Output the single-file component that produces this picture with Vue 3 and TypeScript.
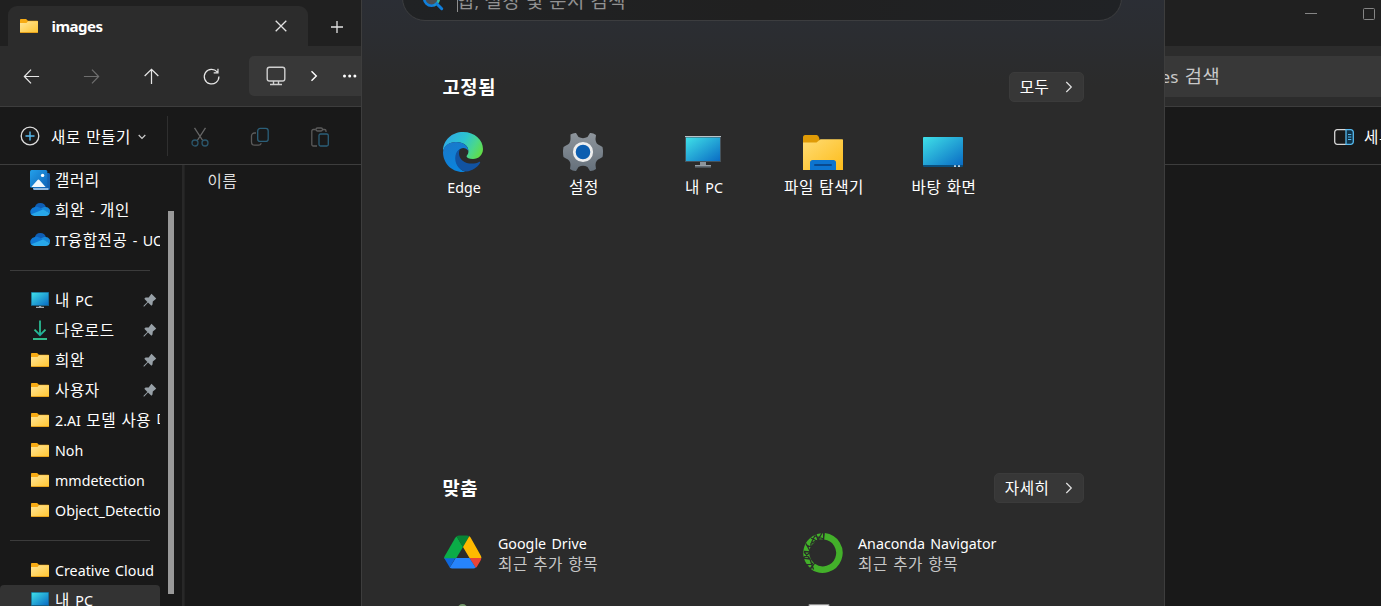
<script setup lang="ts">
import { h, type FunctionalComponent } from 'vue'

type IconName = 'gallery' | 'cloud' | 'pc' | 'download' | 'folder'
interface NavItem { icon?: IconName; text?: string; pinned?: boolean; active?: boolean }

// Splits a caption into Hangul and Latin runs so that each script keeps its own metrics.
const Label: FunctionalComponent<{ text: string }> = (props) =>
  h('span', { class: 'label' },
    (props.text.match(/[\u3131-\uD79D]+|[^\u3131-\uD79D]+/g) ?? []).map((run) =>
      h('span', { class: /[\u3131-\uD79D]/.test(run) ? 'ko' : 'en' }, run)))
Label.props = ['text']

const nav: NavItem[] = [
  { icon: 'gallery', text: '갤러리' },
  { icon: 'cloud', text: '희완 - 개인' },
  { icon: 'cloud', text: 'IT융합전공 - UOU' },
  {},
  { icon: 'pc', text: '내 PC', pinned: true },
  { icon: 'download', text: '다운로드', pinned: true },
  { icon: 'folder', text: '희완', pinned: true },
  { icon: 'folder', text: '사용자', pinned: true },
  { icon: 'folder', text: '2.AI 모델 사용 매뉴얼' },
  { icon: 'folder', text: 'Noh' },
  { icon: 'folder', text: 'mmdetection' },
  { icon: 'folder', text: 'Object_Detection' },
  {},
  { icon: 'folder', text: 'Creative Cloud' },
  { icon: 'pc', text: '내 PC', active: true },
]

const pins = [
  { id: 'edge', text: 'Edge' },
  { id: 'settings', text: '설정' },
  { id: 'pc', text: '내 PC' },
  { id: 'explorer', text: '파일 탐색기' },
  { id: 'desktop', text: '바탕 화면' },
]
</script>

<template>
  <div class="screen">
    <svg class="defs" width="0" height="0">
      <defs>
        <linearGradient id="gFolder" x1="0" y1="0" x2="1" y2="1"><stop offset="0" stop-color="#ffe69a" /><stop offset="1" stop-color="#ffc634" /></linearGradient>
        <linearGradient id="gScreen" x1="0" y1="0" x2="1" y2="1"><stop offset="0" stop-color="#3fe0e8" /><stop offset="1" stop-color="#0a6cc4" /></linearGradient>
        <linearGradient id="gGal" x1="0" y1="0" x2="1" y2="1"><stop offset="0" stop-color="#23a0ea" /><stop offset="1" stop-color="#0f63b8" /></linearGradient>
        <linearGradient id="gDown" x1="0" y1="0" x2="0" y2="1"><stop offset="0" stop-color="#35c98e" /><stop offset="1" stop-color="#12a3a0" /></linearGradient>
        <linearGradient id="gGear" x1="0" y1="0" x2="0" y2="1"><stop offset="0" stop-color="#8e959c" /><stop offset="1" stop-color="#65707b" /></linearGradient>
        <linearGradient id="gEdgeTop" x1="0" y1="0.3" x2="1" y2="0.7"><stop offset="0" stop-color="#2fa9e6" /><stop offset="0.45" stop-color="#2cc4cf" /><stop offset="0.75" stop-color="#4ad78c" /><stop offset="1" stop-color="#62dd45" /></linearGradient>
        <linearGradient id="gEdgeLow" x1="0" y1="0" x2="0.4" y2="1"><stop offset="0" stop-color="#1b78c8" /><stop offset="1" stop-color="#0a84dd" /></linearGradient>
        <linearGradient id="gBig" x1="0" y1="0" x2="1" y2="1"><stop offset="0" stop-color="#ffdc74" /><stop offset="1" stop-color="#fdbc1a" /></linearGradient>
        <linearGradient id="gSearch" x1="0" y1="0" x2="1" y2="0"><stop offset="0.6" stop-color="#0f7fdc" /><stop offset="1" stop-color="#37bfa0" /></linearGradient>

        <symbol id="folder" viewBox="0 0 20 20">
          <path d="M1 4.200C1 3.500 1.400 3 2.100 3h5l1.800 1.700H18c.6 0 1 .4 1 1V8H1z" fill="#f7ab14" />
          <path d="M1 7h6.500L9 5.300h10V16H1z" fill="url(#gFolder)" />
          <path d="M1 16h18v.4c0 .4-.3.6-.7.6H1.700c-.4 0-.7-.2-.7-.6z" fill="#e8a31d" />
        </symbol>
        <symbol id="pc" viewBox="0 0 20 20">
          <rect x="1" y="2" width="18" height="14" fill="#155f85" />
          <rect x="1.700" y="2.700" width="16.600" height="12.300" fill="url(#gScreen)" />
          <path d="M9 16h2.200v1H9z" fill="#8f9aa3" /><path d="M6 16.800h8v1H6z" fill="#c9d2d8" />
        </symbol>
        <symbol id="cloud" viewBox="0 0 20 20">
          <path d="M4.700 7.500A5.800 5.800 0 0 1 15.900 7L11 11.800z" fill="#0f5eb4" />
          <path d="M4.800 6.900c2.200-.6 4 .1 5.400 1.100l4 2.500L1.500 15A4.900 4.900 0 0 1 4.800 6.900z" fill="#0f78d4" />
          <path d="M15.900 6.900a4.600 4.600 0 0 1 4 6.100L14 10.800l-3.200-2.200c1.300-1.200 3.100-1.800 5.100-1.700z" fill="#1688d9" />
          <path d="M1.200 14.300 13 9.500l6.800 3.500c-.5 1.800-1.900 3-3.900 3H4.400c-1.300 0-2.500-.6-3.200-1.700z" fill="#28a8ea" />
        </symbol>
        <symbol id="gallery" viewBox="0 0 20 20">
          <path d="M17 3h1.500c.8 0 1.500.7 1.500 1.500v14c0 .8-.7 1.500-1.500 1.500H4.500c-.8 0-1.500-.6-1.500-1.500z" fill="#135fae" />
          <path d="M3 18h15.500v1c0 .6-.4 1-1 1H4.400A1.400 1.400 0 0 1 3 18.600z" fill="#8fb9e2" />
          <rect x="0" y="0" width="17.300" height="17.800" rx="1.500" fill="url(#gGal)" />
          <path d="m1.300 17 6-6.800c.7-.8 1.600-.8 2.300 0l6 6.800z" fill="#f2f8fd" /><circle cx="12.600" cy="5.400" r="1.700" fill="#fff" />
        </symbol>
        <symbol id="download" viewBox="0 0 20 20">
          <path d="M4.500 9.700 10 15.200l5.500-5.500" fill="none" stroke="url(#gDown)" stroke-width="1.800" />
          <path d="M10 .500v14" stroke="#2abb93" stroke-width="1.800" /><path d="M3 19h14" stroke="#36cf98" stroke-width="1.800" />
        </symbol>
        <symbol id="pin" viewBox="0 0 14 14">
          <path d="M8.500.800 13.200 5.500 12 6.700 9.800 8.500 9.500 11.600 8.400 12.700 5 9.600 1.300 13.400.5 13.600.6 12.700 4.400 8.900 1.300 5.700 2.500 4.600 5.700 4.400 7.500 2z" fill="#97a0a7" />
        </symbol>
      </defs>
    </svg>

    <div class="explorer">
      <header class="tabs">
        <div class="tab">
          <svg class="i20"><use href="#folder" /></svg>
          <b class="tab-title">images</b>
          <svg class="close" width="12" height="12" viewBox="0 0 12 12"><path d="M.7.700l10.600 10.600M11.300.7.700 11.300" /></svg>
        </div>
        <svg class="plus" width="14" height="14" viewBox="0 0 14 14"><path d="M7 1v12M1 7h12" /></svg>
        <div class="caption">
          <svg width="12" height="12" viewBox="0 0 12 12"><path d="M0 5.500h12" /></svg>
          <svg width="12" height="12" viewBox="0 0 12 12"><rect x=".5" y=".5" width="11" height="11" rx="1" /></svg>
        </div>
      </header>

      <div class="navbar">
        <svg class="ln" viewBox="0 0 20 20"><path d="M18 10H3M9.500 2.800 2.500 10l7 7.200" /></svg>
        <svg class="ln dim" viewBox="0 0 20 20"><path d="M2 10H17M10.500 2.800 17.500 10l-7 7.200" /></svg>
        <svg class="ln" viewBox="0 0 20 20"><path d="M10 18V3M2.800 9.500 10 2.500l7.200 7" /></svg>
        <svg class="ln" viewBox="0 0 20 20"><path d="M16 5.200A7.700 7.700 0 1 0 17.800 10M16.800 1.800v4.500h-4.500" /></svg>
        <div class="address">
          <svg width="20" height="20" viewBox="0 0 20 20"><rect x="1.200" y="1.200" width="17.600" height="13.800" rx="2.200" /><path d="M7.500 15v3M12.500 15v3M4 18.500h12" /></svg>
          <svg class="chev" width="8" height="12" viewBox="0 0 8 12"><path d="M1.500 1.200 6.300 6 1.500 10.800" /></svg>
          <svg class="dots" width="16" height="4" viewBox="0 0 16 4"><circle cx="2.500" cy="2" r="1.500" /><circle cx="7.700" cy="2" r="1.500" /><circle cx="12.900" cy="2" r="1.500" /></svg>
        </div>
        <div class="find"><Label text="images 검색" /></div>
      </div>

      <div class="commands">
        <svg class="new" width="20" height="20" viewBox="0 0 20 20"><circle cx="10" cy="10" r="8.800" fill="none" stroke="#dcdcdc" stroke-width="1.300" /><path d="M10 5.500v9M5.500 10h9" stroke="#55b9ee" stroke-width="1.400" /></svg>
        <Label class="new-text" text="새로 만들기" />
        <svg class="down" width="8" height="6" viewBox="0 0 8 6"><path d="M.7 1 4 4.400 7.300 1" /></svg>
        <i class="sep"></i>
        <svg class="cmd" viewBox="0 0 20 20"><path d="M4.500.800 12.700 13.500M15.500.800 7.300 13.500" stroke="#666" /><circle cx="5" cy="16" r="3" stroke="#2b566b" /><circle cx="15" cy="16" r="3" stroke="#2b566b" /></svg>
        <svg class="cmd" viewBox="0 0 20 20"><path d="M6 6H4.500a3 3 0 0 0-3 3v6a3.200 3.200 0 0 0 3.200 3.200H8.500a3 3 0 0 0 2.800-2" stroke="#5b5b5b" /><rect x="7.700" y="1.400" width="10.500" height="13" rx="2.500" stroke="#2b5f79" /></svg>
        <svg class="cmd" viewBox="0 0 20 20"><path d="M7 19H3.300a1.500 1.500 0 0 1-1.500-1.500V4a1.500 1.500 0 0 1 1.500-1.500h2.500M12.800 2.500h1.700A1.500 1.500 0 0 1 16 4v1" stroke="#5b5b5b" /><rect x="6" y="1" width="6.500" height="3" rx="1.400" stroke="#5b5b5b" /><rect x="9" y="7" width="9.300" height="12" rx="1.500" stroke="#2b5f79" /></svg>
        <div class="details">
          <svg width="20" height="16" viewBox="0 0 20 16"><path d="M12 .700H3.200A2.500 2.500 0 0 0 .7 3.200v9.600a2.500 2.500 0 0 0 2.500 2.500H12" fill="none" stroke="#d5d5d5" stroke-width="1.300" /><path d="M12 .700h4.800a2.500 2.500 0 0 1 2.500 2.500v9.600a2.500 2.500 0 0 1-2.500 2.500H12z" fill="#0f3349" stroke="#55b9ee" stroke-width="1.300" /><path d="M14 5.500h3.300M14 8h3.300M14 10.500h3.300" stroke="#55b9ee" /></svg>
          <Label class="details-text" text="세부 정보" />
        </div>
      </div>

      <div class="body">
        <nav class="side">
          <div v-for="(n, k) in nav" :key="k" class="row" :class="{ active: n.active, rule: !n.text }">
            <template v-if="n.text">
              <svg class="i20"><use :href="'#' + n.icon" /></svg>
              <Label class="row-text" :text="n.text" />
              <svg v-if="n.pinned" class="pin"><use href="#pin" /></svg>
            </template>
          </div>
        </nav>
        <div class="scroll"><i></i></div>
        <div class="split"></div>
        <main class="files">
          <Label text="이름" />
          <svg width="10" height="10" viewBox="0 0 10 10"><path d="M.5 6.500 5.500 1.500 10.500 6.500" /></svg>
        </main>
      </div>
    </div>

    <section class="start">
      <div class="search">
        <svg width="22" height="22" viewBox="0 0 22 22"><circle cx="9.500" cy="9.500" r="7.300" fill="#4a4f54" stroke="url(#gSearch)" stroke-width="2.600" /><path d="m14.700 14.700 5 5" stroke="#0f7fdc" stroke-width="3" stroke-linecap="round" /></svg>
        <Label text="앱, 설정 및 문서 검색" /><i class="caret"></i>
      </div>

      <div class="head pinned-head">
        <Label class="title" text="고정됨" />
        <button><Label text="모두" /><svg width="8" height="12" viewBox="0 0 8 12"><path d="M1.300 1 6.300 6 1.300 11" /></svg></button>
      </div>

      <div class="pins">
        <div v-for="p in pins" :key="p.id" class="tile">
          <svg v-if="p.id === 'edge'" width="40" height="40" viewBox="0 0 40 40">
            <path d="M0 19C0 8 9 0 20 0c12 0 20 8 20 17 0 6-4.500 10-10 10-4 0-6-1-6.400-2.400-.3-1 1.800-2 1.800-5.400C25.400 13.500 20 10 13.500 10 6 10 1.500 14 0 19z" fill="url(#gEdgeTop)" />
            <path d="M0 20C.8 13.500 6 10 13 10c7.500 0 12.400 4.300 12.400 9 0 0-1.800-3-5-3-3.800 0-7.400 4-7.400 10 0 7 5 13 9.500 13.800C10 41.500 0 32 0 20z" fill="url(#gEdgeLow)" />
            <path d="M17 17c-3 1.500-4.800 5-4.800 9.300C12.200 34 18 39.500 23.500 39.500 29 39 34.300 35.600 37 31c.6-1-.3-1.400-1-1-2 1-4.400 1.600-7 1.600-7.500 0-13-4.600-13-10.200 0-1.800.4-3.200 1-4.400z" fill="#1153a2" />
          </svg>
          <svg v-else-if="p.id === 'settings'" width="40" height="40" viewBox="-20 -20 40 40">
            <path d="M-12.500-17.500Q-9.500-19.300-7-19L-4.500-15Q0-12.700 4.500-15L7-19Q10-19.300 13-17L12.500-13Q12.500-8 17-6.500L19.500-5Q20.500 0 19.500 5L17 6.500Q12.500 8 12.500 13L13 17Q10 19.300 7 19L4.500 15Q0 12.700-4.500 15L-7 19Q-10 19.300-13 17L-12.500 13Q-12.500 8-17 6.500L-19.500 5Q-20.500 0-19.500-5L-17-6.500Q-12.500-8-12.500-13z" fill="url(#gGear)" />
            <circle r="8.700" fill="#0d5eb0" stroke="#eee" stroke-width="2.800" />
          </svg>
          <svg v-else-if="p.id === 'pc'" width="40" height="40" viewBox="0 0 40 40">
            <rect x="2" y="4" width="36" height="26" fill="#46535c" /><rect x="2" y="4" width="36" height="1" fill="#b9c3c9" /><rect x="3" y="5.500" width="34" height="23.500" fill="url(#gScreen)" />
            <path d="M17 30h6v3.500h-6z" fill="#8c949a" /><path d="M12 33h16v2.600H12z" fill="#606a72" /><path d="M12 33h16v.8H12z" fill="#a5adb3" />
          </svg>
          <svg v-else-if="p.id === 'explorer'" width="40" height="40" viewBox="0 0 40 40">
            <path d="M0 5.500C0 4 .7 3 2.200 3h11c1.300 0 2.600.8 3.400 4.500V11H0z" fill="#e09b06" />
            <path d="M0 10.500h13.500l4-3.300H39c.6 0 1 .4 1 1V38H0z" fill="url(#gBig)" />
            <path d="M7 38v-7.500c0-1.500 1-2.500 2.500-2.500h21c1.500 0 2.500 1 2.500 2.500V38z" fill="#0d74cf" /><path d="M12 33h16" stroke="#09498e" stroke-width="2" stroke-linecap="round" />
          </svg>
          <svg v-else width="40" height="40" viewBox="0 0 40 40">
            <rect x="0" y="5" width="40" height="30" rx="1" fill="#0a4f7d" /><path d="M0 6q0-1 1-1h38q1 0 1 1v27H0z" fill="url(#gScreen)" /><path d="M31 33.200h2v1.800h-2zM35 33.200h2v1.800h-2z" fill="#b9d2e6" />
          </svg>
          <Label class="tile-text" :text="p.text" />
        </div>
      </div>

      <div class="head rec-head">
        <Label class="title" text="맞춤" />
        <button><Label text="자세히" /><svg width="8" height="12" viewBox="0 0 8 12"><path d="M1.300 1 6.300 6 1.300 11" /></svg></button>
      </div>

      <div class="recs">
        <div class="rec">
          <svg width="40" height="40" viewBox="0 0 40 40">
            <path d="m1.300 25.300 5.500 9.100 6-10.200H1.300z" fill="#0f66da" /><path d="M13.700 3.500C12.900 4 12.500 4.500 12 5.200L1.900 22.700c-.5.900-.6 1.300-.6 2.600h11.900L20 14z" fill="#0bac47" />
            <path d="M13.500 3.200c1-.5 1.500-.7 2.500-.7h7.800c1 0 1.600.2 2.500.7L20 14.200z" fill="#078435" />
            <path d="M26.300 3.200c.7.500 1.200 1 1.700 2l9.700 17.200c.5.900.7 1.500.7 2.700H26.500L20 14z" fill="#ffba00" />
            <path d="M26.300 25h12c0 1-.2 1.600-.7 2.500l-3.400 5.700c-.4.700-.9 1.200-1.500 1.600z" fill="#ea4335" />
            <path d="M12.700 25h13.800l6.200 9.800c-.7.400-1.300.6-2.300.6H9.200c-1 0-1.700-.2-2.500-.7z" fill="#2684fc" />
          </svg>
          <div class="rec-text"><Label text="Google Drive" /><Label class="sub" text="최근 추가 항목" /></div>
        </div>
        <div class="rec">
          <svg width="40" height="40" viewBox="0 0 40 40" fill="none">
            <path d="M21.500 3.300A16.700 16.700 0 1 1 10 33.500" stroke="#43b02a" stroke-width="6.500" />
            <path d="M9 32.600A16.700 16.700 0 0 1 20 3.300" stroke="#43b02a" stroke-width="6" />
            <path d="M10.500 36.500 7 26 0 25M3 32l7-1.500M7 26l-6-7M0 25l7.500-6L3 10.500M1 18.500l6.500.5M7.500 19 8 10.500 15 7 12.500 0M3 12l6.500 2.500M8 5l7 3.500M12 2.500 8.500 9.500M19 0l-4 7 5.500 1M12 3l9 3" stroke="#2b2b2b" stroke-width="1.300" />
          </svg>
          <div class="rec-text"><Label text="Anaconda Navigator" /><Label class="sub" text="최근 추가 항목" /></div>
        </div>
        <div class="rec"><svg width="40" height="40" viewBox="0 0 40 40"><circle cx="19.500" cy="16" r="5" fill="#73976a" /></svg></div>
        <div class="rec"><svg width="40" height="40" viewBox="0 0 40 40"><path d="M6 11.500h20v25H6z" fill="#e7e7e7" stroke="#8d8d8d" /></svg></div>
      </div>
    </section>
  </div>
</template>

<style>
body { margin: 0; background: #191919; }
.label { white-space: pre; display: inline-block; line-height: 20px; word-spacing: 0.11em; }
.label .ko { font-size: 1.04em; letter-spacing: 0.035em; line-height: 1; vertical-align: 0.5px; }
.label .en { font-size: 0.95em; }
</style>

<style scoped>
.screen { position: relative; width: 1381px; height: 606px; overflow: hidden; background: #191919; color: #fff; font: 15px/20px "Noto Sans", "Noto Sans CJK KR", sans-serif; }
.defs { position: absolute; }
.i20 { width: 20px; height: 20px; flex: none; }
.explorer { height: 606px; display: flex; flex-direction: column; }
.tabs { height: 46px; flex: none; background: #202020; display: flex; align-items: center; }
.tab { box-sizing: border-box; width: 300px; height: 40px; margin: 6px 0 0 8px; padding: 0 21px 0 11px; border-radius: 9px 9px 0 0; background: #2c2c2c; display: flex; align-items: center; }
.tab-title { margin-left: 12.500px; font-size: 15px; letter-spacing: -0.500px; }
.tab .close { margin-left: auto; }
.close, .plus { fill: none; stroke: #e2e2e2; stroke-width: 1.300; }
.plus { margin: 7px 0 0 22px; }
.caption { margin: -18px 6px 0 auto; display: flex; gap: 46px; fill: none; stroke: #858585; }
.navbar { height: 60px; flex: none; display: flex; align-items: center; background: #2c2c2c; border-bottom: 1px solid #3d3d3d; }
.ln { width: 19px; height: 19px; margin: 0 19px 0 22px; flex: none; fill: none; stroke: #e6e6e6; stroke-width: 1.300; }
.ln + .ln { margin-left: 22px; }
.dim { stroke: #6e6e6e; }
.address { box-sizing: border-box; width: 300px; height: 40px; margin-left: 9px; padding-left: 17px; border-radius: 5px; background: #383838; display: flex; align-items: center; fill: none; stroke: #cfcfcf; stroke-width: 1.400; }
.address > svg:first-child { margin-top: -1px; }
.address .chev { margin-left: 24px; stroke: #fff; }
.address .dots { margin: -1px 0 0 24px; fill: #fff; stroke: none; }
.find { box-sizing: border-box; width: 281px; height: 41px; margin-left: auto; padding: 1px 0 0 20px; background: #383838; color: #c9c9c9; font-size: 18px; display: flex; align-items: center; }
.commands { height: 57px; flex: none; display: flex; align-items: center; border-bottom: 1px solid #3d3d3d; }
.commands > svg { margin-top: 2px; }
.commands .new { margin: 0 0 0 19.500px; }
.new-text { margin: 4px 0 0 11.500px; width: 80px; }
.commands .down { margin-left: 7px; fill: none; stroke: #ccc; stroke-width: 1.200; }
.sep { width: 1px; height: 40px; margin: 0 22px 0 21px; background: #2f2f2f; }
.cmd { width: 20px; height: 20px; margin-right: 40px; fill: none; stroke-width: 1.300; }
.details { margin: 2px 0 0 auto; width: 47px; display: flex; gap: 10px; align-items: center; white-space: nowrap; }
.details svg { flex: none; }
.details-text { margin-top: 2px; }
.body { flex: 1; min-height: 0; display: flex; overflow: hidden; }
.side { width: 160px; flex: none; overflow: hidden; }
.row { box-sizing: border-box; position: relative; height: 30px; padding-left: 30px; display: flex; align-items: center; overflow: hidden; }
.row-text { margin-left: 5px; }
.row.rule::before { content: ""; height: 1px; width: 140px; margin-left: -20px; background: #3b3b3b; }
.row.active { background: #333; border-radius: 4px 4px 0 0; }
.pin { position: absolute; left: 143px; top: 8px; width: 14px; height: 14px; }
.scroll { width: 6px; margin-left: 8px; padding-top: 46px; }
.scroll i { display: block; height: 383px; background: #999; }
.split { width: 2px; margin-left: 8px; background: #282828; border-right: 1px solid #222; }
.files { width: 181px; display: flex; color: #dedede; padding: 6px 0 0 22.500px; }
.files svg { margin: -7px -3px 0 auto; fill: none; stroke: #8b8b8b; }

.start { box-sizing: border-box; position: absolute; left: 361px; top: -25px; width: 804px; height: 640px; border: 1px solid #3d3d3d; background: linear-gradient(#2b2e35 20px, #2b2d31 60px, #2b2b2b 110px); }
.search { position: relative; box-sizing: border-box; width: 720px; height: 46px; margin: -1px 0 0 40px; border: 1px solid #3c3d3f; border-radius: 23px; background: linear-gradient(90deg, #202224, #202020 50%, #202225); display: flex; align-items: center; color: #929292; font-size: 18px; padding-left: 18.500px; }
.search svg { flex: none; margin-top: 4px; }
.search .label { margin: 6px 0 0 13px; word-spacing: 0.06em; }
.caret { position: absolute; left: 54px; top: 16px; width: 1px; height: 20px; background: #8e8e8e; }
.head { display: flex; width: 641px; height: 30px; margin-left: 80.500px; align-items: center; justify-content: space-between; }
.pinned-head { margin-top: 51px; }
.title { font-size: 18px; font-weight: 700; }
button { box-sizing: border-box; height: 30px; padding: 0 10px; border: 1px solid #3b3b3b; border-radius: 5px; background: #373737; color: #fff; font: inherit; display: flex; align-items: center; gap: 15px; }
button svg { fill: none; stroke: #e2e2e2; stroke-width: 1.200; }
.pins { display: flex; margin: 30px 0 0 41px; }
.tile { width: 120px; display: flex; flex-direction: column; align-items: center; gap: 5px; }
.tile-text { margin-left: 2px; }
.rec-head { margin-top: 275px; }
.recs { display: grid; grid-template-columns: 360px 360px; row-gap: 20px; margin: 30px 0 0 81px; }
.rec { display: flex; height: 40px; }
.rec-text { display: flex; flex-direction: column; margin-left: 15px; }
.sub { color: #c6c6c6; }
</style>
